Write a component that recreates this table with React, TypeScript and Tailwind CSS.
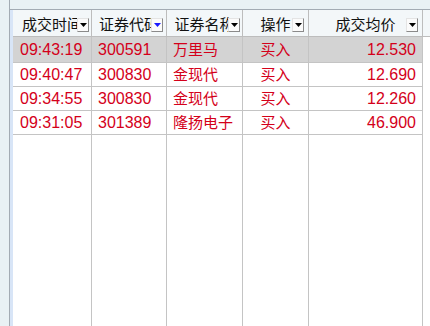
import React from 'react';

const rows = [
  { time: '09:43:19', code: '300591', name: '万里马', op: '买入', price: '12.530' },
  { time: '09:40:47', code: '300830', name: '金现代', op: '买入', price: '12.690' },
  { time: '09:34:55', code: '300830', name: '金现代', op: '买入', price: '12.260' },
  { time: '09:31:05', code: '301389', name: '隆扬电子', op: '买入', price: '46.900' },
];

const cols = [
  { title: '成交时间', w: 'w-[79px]', btn: 'right-[2px]' },
  { title: '证券代码', w: 'w-[75px]', btn: 'right-[3px]', sorted: true },
  { title: '证券名称', w: 'w-[76px]', btn: 'right-[2px]' },
  { title: '操作', w: 'w-[66px]', btn: 'right-[4px]' },
  { title: '成交均价', w: 'w-[114px]', btn: 'right-[4px]' },
];

function DropButton({ pos, sorted }: { pos: string; sorted?: boolean }) {
  return (
    <div
      className={`absolute top-[8px] ${pos} flex h-[14px] w-[12px] items-center justify-center border border-b-[#8a8a8a] border-l-[#e4e4e4] border-r-[#8a8a8a] border-t-[#e4e4e4] bg-[#fbfbfb]`}
    >
      <svg width="7" height="4" viewBox="0 0 7 4">
        <polygon points="0,0 7,0 3.5,4" fill={sorted ? '#1a1aff' : '#000'} />
      </svg>
    </div>
  );
}

export default function App() {
  return (
    <div
      className="flex h-[326px] w-[430px] overflow-hidden bg-[#e9f1f4] text-[16px]"
      style={{ fontFamily: '"Liberation Sans", "Noto Sans CJK SC", sans-serif' }}
    >
      <div className="w-[9px] shrink-0" />
      <div className="flex flex-1 flex-col border-l border-[#a3abb3]">
        <div className="h-[9px] shrink-0" />
        <div className="flex flex-1 border-t border-[#a3abb3]">
          <div className="w-[3px] shrink-0 bg-[#d8e5f7]" />
          <div className="flex flex-1 flex-col bg-white">
            {/* header */}
            <div className="flex h-[27px] shrink-0 border-b border-[#bdbdbd] bg-[#f3f7f9]">
              {cols.map((c) => (
                <div
                  key={c.title}
                  className={`relative ${c.w} flex shrink-0 items-center justify-center overflow-hidden border-r border-[#bdbdbd] pt-[3px] text-[15px] leading-none text-[#111]`}
                >
                  <span className="whitespace-nowrap">{c.title}</span>
                  <DropButton pos={c.btn} sorted={c.sorted} />
                </div>
              ))}
              <div className="flex-1" />
            </div>

            {rows.map((r, i) => (
              <div
                key={i}
                className={`flex shrink-0 text-[#d4001a] leading-none ${i === 0 ? 'h-[26px]' : 'h-[24px]'}`}
              >
                <div className={`flex w-[79px] items-center border-b border-r border-[#c4c4c4] pl-[7px] ${i === 0 ? 'bg-[#d3d3d3]' : ''}`}>
                  {r.time}
                </div>
                <div className={`flex w-[75px] items-center border-b border-r border-[#c4c4c4] pl-[6px] ${i === 0 ? 'bg-[#d3d3d3]' : ''}`}>
                  {r.code}
                </div>
                <div className={`flex w-[76px] items-center whitespace-nowrap border-b border-r border-[#c4c4c4] pl-[6px] text-[15px] ${i === 0 ? 'bg-[#d3d3d3]' : ''}`}>
                  {r.name}
                </div>
                <div className={`flex w-[66px] items-center justify-center border-b border-r border-[#c4c4c4] text-[15px] ${i === 0 ? 'bg-[#d3d3d3]' : ''}`}>
                  {r.op}
                </div>
                <div className={`flex w-[114px] items-center justify-end border-b border-r border-[#c4c4c4] pr-[6px] ${i === 0 ? 'bg-[#d3d3d3]' : ''}`}>
                  {r.price}
                </div>
                <div className="flex-1" />
              </div>
            ))}

            {/* empty area keeps the column lines */}
            <div className="flex flex-1">
              {cols.map((c) => (
                <div key={c.title} className={`${c.w} shrink-0 border-r border-[#c4c4c4]`} />
              ))}
              <div className="flex-1" />
            </div>
          </div>
        </div>
      </div>
    </div>
  );
}
